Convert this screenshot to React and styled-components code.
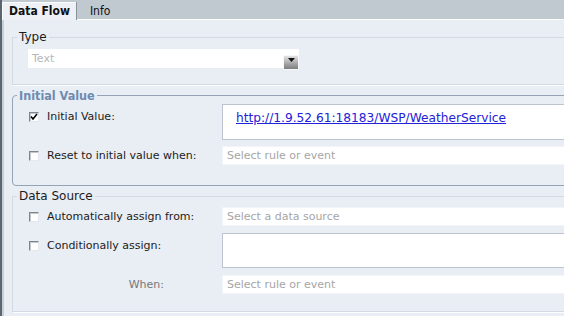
import React from 'react';
import styled, { createGlobalStyle } from 'styled-components';

const ui = '"DejaVu Sans Condensed", "DejaVu Sans", sans-serif';
const wide = '"DejaVu Sans", sans-serif';

const GlobalStyle = createGlobalStyle`
  html, body {
    margin: 0;
    padding: 0;
    background: #e9edf4;
    overflow: hidden;
  }
  body {
    font-family: ${wide};
    font-size: 11px;
    color: #1c1c1c;
  }
`;

const Panel = styled.div`
  width: 760px;
  height: 316px;
  display: flex;
  flex-direction: column;
  border-left: 2px solid #5b6670;
  background: #e9edf4;
`;

const TabBar = styled.div`
  height: 19px;
  display: flex;
  align-items: flex-end;
  background: #c0c8d0;
  border-bottom: 1px solid #fbfcfd;
`;

const Tab = styled.div`
  height: ${(p) => (p.active ? '18px' : '17px')};
  display: flex;
  align-items: center;
  padding: 0 6px 0 ${(p) => (p.active ? '7px' : '13px')};
  font-family: ${ui};
  font-size: 12px;
  font-weight: ${(p) => (p.active ? 'bold' : 'normal')};
  color: #111;
  background: ${(p) => (p.active ? '#edf0f5' : 'transparent')};
  border-right: ${(p) => (p.active ? '1px solid #8a939c' : 'none')};
  box-shadow: ${(p) => (p.active ? 'inset 1px 1px 0 #fbfcfd' : 'none')};
  margin-bottom: ${(p) => (p.active ? '-1px' : '0')};
`;

const Content = styled.div`
  flex: 1;
  padding: 11px 0 0 10px;
  box-shadow: inset 2px 0 0 #c9cfd6;
`;

const Group = styled.fieldset`
  margin: ${(p) => p.gap || 0}px 0 0 0;
  padding: 0 0 ${(p) => p.bottom || 16}px 4px;
  min-width: 0;
  border: 1px solid ${(p) => (p.strong ? '#94a4b6' : '#d3dae3')};
  border-radius: ${(p) => (p.strong ? '4px' : '0')};
  box-shadow: ${(p) => (p.strong ? 'none' : '1px 1px 0 #fbfcfd')};
`;

const Legend = styled.legend`
  padding: 0 2px;
  font-family: ${(p) => (p.strong ? ui : wide)};
  font-size: ${(p) => (p.strong ? '12.5px' : '12px')};
  line-height: 13px;
  font-weight: ${(p) => (p.strong ? 'bold' : 'normal')};
  color: ${(p) => (p.strong ? '#6d8bb1' : '#1c1c1c')};
`;

const Body = styled.div`
  padding: ${(p) => p.top || 0}px 0 0 11px;
  display: flex;
  flex-direction: column;
  gap: ${(p) => p.rowGap || 6}px;
`;

const Row = styled.div`
  display: grid;
  grid-template-columns: 194px 1fr;
  align-items: ${(p) => (p.tall ? 'start' : 'center')};
`;

const Label = styled.label`
  display: flex;
  align-items: center;
  gap: 8px;
  padding: ${(p) => (p.tall ? '7px' : '0')} 0 0 1px;
  line-height: 12px;
  white-space: nowrap;
  justify-content: ${(p) => (p.right ? 'flex-end' : 'flex-start')};
  padding-right: ${(p) => (p.right ? '58px' : '0')};
  color: ${(p) => (p.muted ? '#777' : '#1c1c1c')};
`;

const Box = styled.span`
  width: 8px;
  height: 8px;
  flex: none;
  display: inline-flex;
  align-items: center;
  justify-content: center;
  background: #fff;
  border-top: 1px solid #7f858c;
  border-left: 1px solid #7f858c;
  border-bottom: 1px solid #e4e8ee;
  border-right: 1px solid #e4e8ee;
  box-shadow: inset 1px 1px 0 #c4c8cd;
`;

const Input = styled.div`
  height: 19px;
  box-sizing: border-box;
  display: flex;
  align-items: center;
  padding-left: 4px;
  background: #fff;
  border: 1px solid #f2f4f7;
  color: #a6a6a6;
  white-space: nowrap;
`;

const Area = styled.div`
  height: ${(p) => p.h || 36}px;
  box-sizing: border-box;
  padding: 6px 0 0 13px;
  background: #fff;
  border: 1px solid #bcc5cf;
`;

const Link = styled.a`
  font-size: 12.2px;
  color: #2222d8;
  text-decoration: underline;
`;

const Select = styled.div`
  width: 271px;
  height: 19px;
  box-sizing: border-box;
  margin-top: 5px;
  display: flex;
  align-items: center;
  justify-content: space-between;
  padding-left: 4px;
  background: #fff;
  color: #b7b7b7;
`;

const DropButton = styled.span`
  width: 16px;
  height: 15px;
  margin-top: 8px;
  display: flex;
  justify-content: center;
  padding-top: 2px;
  box-sizing: border-box;
  background: linear-gradient(#e2e2e2, #9a9a9a 70%, #7e7e7e);
  border: 1px solid #f6f7f9;
`;

const Check = ({ checked }) => (
  <Box>
    {checked && (
      <svg width="8" height="8" viewBox="0 0 8 8">
        <path d="M1 3.5 L3 6 L7 1" fill="none" stroke="#000" strokeWidth="1.6" />
      </svg>
    )}
  </Box>
);

export default function App() {
  return (
    <>
      <GlobalStyle />
      <Panel>
        <TabBar>
          <Tab active>Data Flow</Tab>
          <Tab>Info</Tab>
        </TabBar>
        <Content>
          <Group bottom={16}>
            <Legend>Type</Legend>
            <Body>
              <Select>
                Text
                <DropButton>
                  <svg width="7" height="4" viewBox="0 0 7 4">
                    <path d="M0 0 H7 L3.5 4 Z" fill="#111" />
                  </svg>
                </DropButton>
              </Select>
            </Body>
          </Group>

          <Group strong gap={4} bottom={20}>
            <Legend strong>Initial Value</Legend>
            <Body top={2}>
              <Row tall>
                <Label tall>
                  <Check checked />
                  Initial Value:
                </Label>
                <Area>
                  <Link href="#">http://1.9.52.61:18183/WSP/WeatherService</Link>
                </Area>
              </Row>
              <Row>
                <Label>
                  <Check />
                  Reset to initial value when:
                </Label>
                <Input>Select rule or event</Input>
              </Row>
            </Body>
          </Group>

          <Group gap={4} bottom={17}>
            <Legend>Data Source</Legend>
            <Body top={4} rowGap={7}>
              <Row>
                <Label>
                  <Check />
                  Automatically assign from:
                </Label>
                <Input>Select a data source</Input>
              </Row>
              <Row tall>
                <Label tall>
                  <Check />
                  Conditionally assign:
                </Label>
                <Area h={35} />
              </Row>
              <Row>
                <Label right muted>When:</Label>
                <Input>Select rule or event</Input>
              </Row>
            </Body>
          </Group>
        </Content>
      </Panel>
    </>
  );
}
